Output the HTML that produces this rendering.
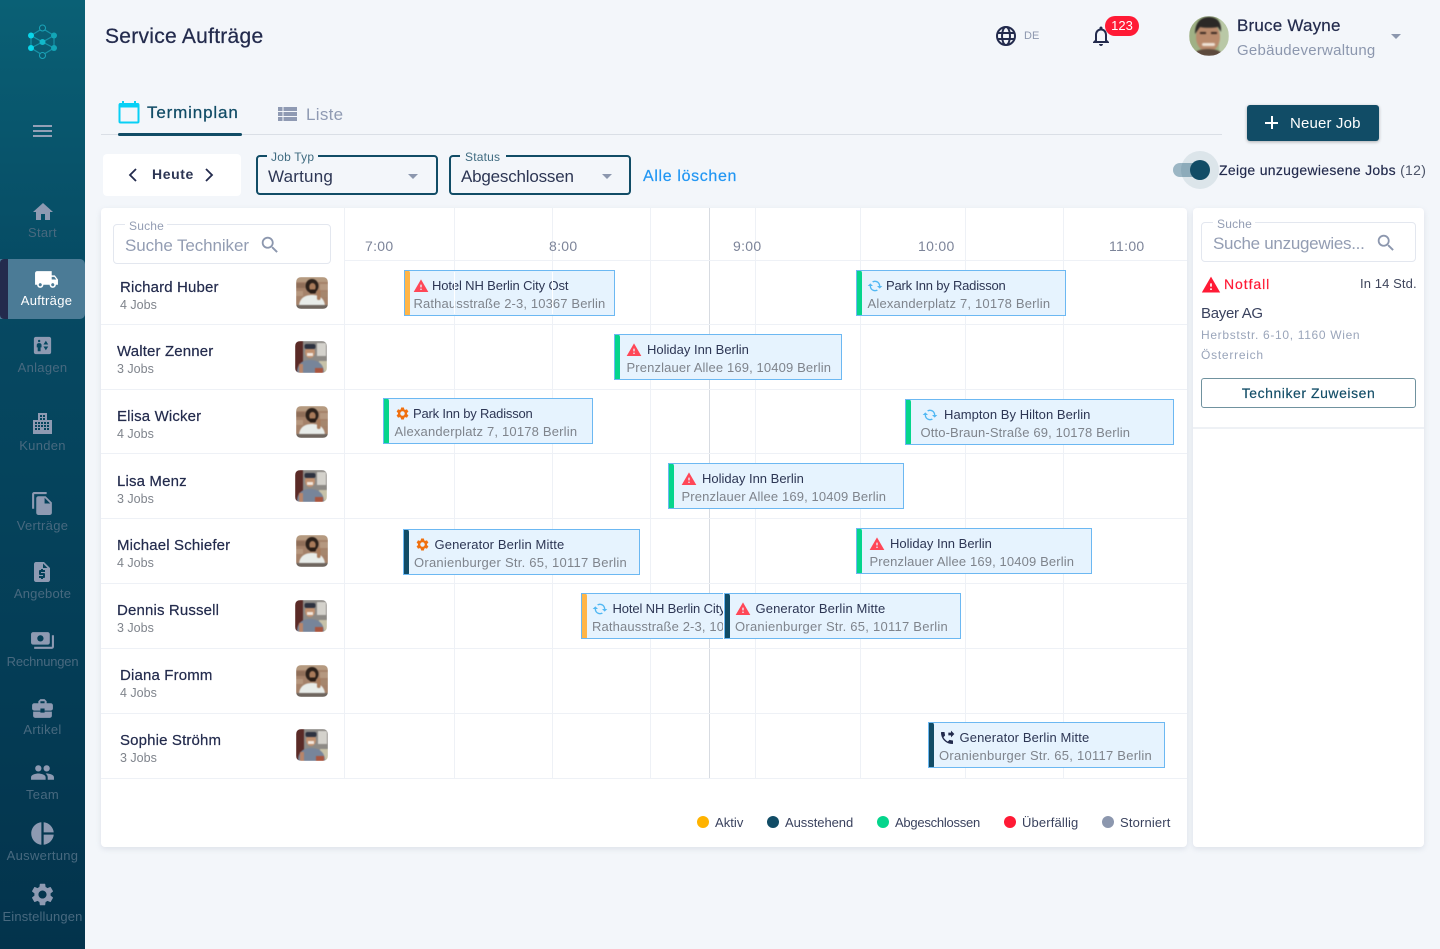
<!DOCTYPE html>
<html lang="de"><head><meta charset="utf-8"><title>Service Aufträge</title>
<style>
*{box-sizing:border-box}
html,body{margin:0;padding:0}
body{width:1440px;height:949px;position:relative;overflow:hidden;background:#f3f6fa;font-family:"Liberation Sans","DejaVu Sans",sans-serif;color:#232b4d}
.a{position:absolute}
.t{position:absolute;white-space:nowrap;line-height:20px;height:20px}
svg{position:absolute;display:block}
#side{left:0;top:0;width:85px;height:949px;background:linear-gradient(180deg,#0a6075 0%,#064a63 30%,#03334c 100%)}
.nl{position:absolute;left:0;width:85px;text-align:center;font-size:13px;color:#48697f;line-height:16px;letter-spacing:.3px;white-space:nowrap}
.ni{position:absolute;fill:#8e9ab2}
.card{position:absolute;height:46px;background:#e6f3fe;border:1.5px solid #6cb8f2;overflow:hidden}
.bar{position:absolute;left:-1.5px;top:-1.5px;bottom:-1.5px;width:6px;border-radius:0 3px 3px 0}
.ti{position:absolute;font-size:13px;line-height:18px;color:#2d3654;white-space:nowrap;margin-top:1px;margin-left:.5px}
.ad{position:absolute;font-size:13px;line-height:18px;color:#7f848c;white-space:nowrap;margin-top:1px}
.hol{letter-spacing:0}.gen{letter-spacing:.12px}.prk{letter-spacing:-.2px}.htl{letter-spacing:-.13px}.hmp{letter-spacing:.05px}
.prz,.rat,.ott{letter-spacing:.13px}.alx{letter-spacing:.19px}.ora{letter-spacing:.25px}
.nm{font-size:15px;color:#232b4d;letter-spacing:.15px;margin-top:1px;-webkit-text-stroke:.2px #232b4d}
.jb{font-size:12.5px;color:#7f848c;letter-spacing:0}
.h{position:absolute;left:345px;width:842px;height:1px;background:#eef1f6}
.h2{position:absolute;left:101px;width:244px;height:1px;background:#eef1f6}
.v{position:absolute;top:208px;height:571px;width:1px;background:#eef1f6}
.tm{font-size:14px;color:#7c8499;letter-spacing:.3px}
.lg{font-size:13px;color:#3a425e;margin-top:1px}
.dot{position:absolute;width:12px;height:12px;border-radius:50%;top:816px}
.av{position:absolute;width:32px;height:32px;border-radius:5px;overflow:hidden}
.av svg{left:0;top:0;filter:blur(.6px)}
</style></head><body>
<svg width="0" height="0" style="position:absolute">
<defs>
<symbol id="warn" viewBox="0 0 24 24"><path d="M1 21h22L12 2 1 21zm12-3h-2v-2h2v2zm0-4h-2v-4h2v4z"/></symbol>
<symbol id="search" viewBox="0 0 24 24"><path d="M15.5 14h-.79l-.28-.27C15.41 12.59 16 11.11 16 9.5 16 5.91 13.09 3 9.5 3S3 5.91 3 9.5 5.91 16 9.5 16c1.61 0 3.09-.59 4.23-1.57l.27.28v.79l5 4.99L20.49 19l-4.99-5zm-6 0C7.01 14 5 11.99 5 9.5S7.01 5 9.5 5 14 7.01 14 9.5 11.99 14 9.5 14z"/></symbol>
<symbol id="sync" viewBox="0 0 24 24"><path d="M12 6v3l4-4-4-4v3c-4.42 0-8 3.58-8 8 0 1.57.46 3.03 1.24 4.26L6.7 14.8C6.25 13.97 6 13.01 6 12c0-3.31 2.69-6 6-6zm6.76 1.74L17.3 9.2c.44.84.7 1.79.7 2.8 0 3.31-2.69 6-6 6v-3l-4 4 4 4v-3c4.42 0 8-3.58 8-8 0-1.57-.46-3.03-1.24-4.26z" transform="rotate(90 12 12)"/></symbol>
<symbol id="gear" viewBox="0 0 24 24"><path d="M19.14 12.94c.04-.3.06-.61.06-.94 0-.32-.02-.64-.07-.94l2.03-1.58c.18-.14.23-.41.12-.61l-1.92-3.32c-.12-.22-.37-.29-.59-.22l-2.39.96c-.5-.38-1.03-.7-1.62-.94l-.36-2.54c-.04-.24-.24-.41-.48-.41h-3.84c-.24 0-.43.17-.47.41l-.36 2.54c-.59.24-1.13.57-1.62.94l-2.39-.96c-.22-.08-.47 0-.59.22L2.74 8.87c-.12.21-.08.47.12.61l2.03 1.58c-.05.3-.09.63-.09.94s.02.64.07.94l-2.03 1.58c-.18.14-.23.41-.12.61l1.92 3.32c.12.22.37.29.59.22l2.39-.96c.5.38 1.03.7 1.62.94l.36 2.54c.05.24.24.41.48.41h3.84c.24 0 .44-.17.47-.41l.36-2.54c.59-.24 1.13-.56 1.62-.94l2.39.96c.22.08.47 0 .59-.22l1.92-3.32c.12-.22.07-.47-.12-.61l-2.01-1.58zM12 15.6c-1.98 0-3.6-1.62-3.6-3.6s1.62-3.6 3.6-3.6 3.6 1.62 3.6 3.6-1.62 3.6-3.6 3.6z"/></symbol>
<symbol id="phone" viewBox="0 0 24 24"><path d="M18 11l5-5-5-5v3h-4v4h4v3zm2 4.5c-1.25 0-2.45-.2-3.57-.57-.35-.11-.74-.03-1.02.24l-2.2 2.2c-2.83-1.44-5.15-3.75-6.59-6.59l2.2-2.21c.28-.26.36-.65.25-1C8.7 6.45 8.5 5.25 8.5 4c0-.55-.45-1-1-1H4c-.55 0-1 .45-1 1 0 9.39 7.61 17 17 17 .55 0 1-.45 1-1v-3.5c0-.55-.45-1-1-1z"/></symbol>
<symbol id="p1" viewBox="0 0 32 32">
<rect width="32" height="32" fill="#a5826a"/><rect y="0" width="32" height="5" fill="#b59a80"/><rect x="0" y="6" width="9" height="5" fill="#8f6e58"/><rect x="24" y="7" width="8" height="6" fill="#b59880"/><rect x="0" y="14" width="7" height="5" fill="#b5967d"/><rect x="25" y="15" width="7" height="5" fill="#a5866d"/>
<ellipse cx="16" cy="9" rx="6.500" ry="7" fill="#2b201a"/><ellipse cx="16.500" cy="10" rx="3.200" ry="4" fill="#a87a5a"/><rect x="13.500" y="12.500" width="6.500" height="4" rx="1.500" fill="#2a1d16"/>
<path d="M3 30c0-8 5-12 13-12s13 4 13 12z" fill="#e8ece9"/><rect x="21" y="13" width="3.500" height="10" rx="1.500" fill="#a87a5a"/><rect y="28" width="32" height="4" fill="#6f665f"/></symbol>
<symbol id="p2" viewBox="0 0 32 32">
<rect width="32" height="32" fill="#8d8a86"/><rect width="8" height="32" fill="#5a2a26"/><rect x="22" y="2" width="9" height="13" fill="#d4d2cc"/><rect x="24" y="20" width="8" height="12" fill="#c7c2a8"/>
<ellipse cx="15" cy="11" rx="5" ry="6" fill="#c0906f"/><rect x="9.500" y="3" width="11" height="5" rx="2" fill="#2d3240"/><rect x="12" y="12" width="6" height="3" fill="#f1e6dc"/>
<path d="M2 32c0-9 5-13 13-13s14 4 14 13z" fill="#77859a"/><rect x="4" y="23" width="4" height="9" fill="#b9856a"/><rect x="20" y="27" width="8" height="5" fill="#a9553e"/></symbol>
</defs></svg>

<div id="side" class="a"></div>
<svg style="left:26px;top:24px" width="33" height="36" viewBox="0 0 33 36" fill="none">
<g stroke="#1893a8" stroke-width="1.2"><path d="M5 11.5L16.500 4.500 28 11.500V24L16.500 31 5 24z"/><path d="M5 11.500L16.500 18 28 11.500M5 24l11.500-6"/><path d="M16.500 18L28 24"/></g>
<circle cx="16.500" cy="4" r="3" fill="#0a5a70" stroke="#1aa6bb" stroke-width="1"/><circle cx="16.500" cy="31.500" r="3" fill="#0a5a70" stroke="#1aa6bb" stroke-width="1"/>
<circle cx="5" cy="11.500" r="3" fill="#08d6ea"/><circle cx="5" cy="24" r="3" fill="#08d6ea"/><circle cx="28" cy="11.500" r="3" fill="#12a5b6"/><circle cx="28" cy="24" r="3" fill="#12a5b6"/><circle cx="16.500" cy="18" r="3" fill="#12b8ca"/>
</svg>
<div class="a" style="left:33px;top:125px;width:19px;height:2px;background:#93a0b6"></div>
<div class="a" style="left:33px;top:130px;width:19px;height:2px;background:#93a0b6"></div>
<div class="a" style="left:33px;top:135px;width:19px;height:2px;background:#93a0b6"></div>

<svg class="ni" style="left:31px;top:200px" width="24" height="24" viewBox="0 0 24 24"><path d="M10 20v-6h4v6h5v-8h3L12 3 2 12h3v8z"/></svg>
<div class="nl" style="top:225px">Start</div>

<div class="a" style="left:0;top:259px;width:85px;height:60px;background:#4b7b96;border-radius:0 5px 5px 0"></div>
<div class="a" style="left:0;top:259px;width:8px;height:60px;background:#232b4d;border-radius:4px 0 0 4px"></div>
<svg style="left:34px;top:267px;fill:#fff" width="25" height="25" viewBox="0 0 24 24"><path d="M20 8h-3V4H3c-1.100 0-2 .9-2 2v11h2c0 1.660 1.340 3 3 3s3-1.340 3-3h6c0 1.660 1.340 3 3 3s3-1.340 3-3h2v-5l-3-4zM6 18.500c-.83 0-1.500-.67-1.500-1.500s.67-1.500 1.500-1.500 1.500.67 1.500 1.500-.67 1.500-1.500 1.500zm13.500-9l1.960 2.500H17V9.500h2.500zm-1.500 9c-.83 0-1.500-.67-1.500-1.500s.67-1.500 1.500-1.500 1.500.67 1.500 1.500-.67 1.500-1.500 1.500z"/></svg>
<div class="nl" style="top:293px;left:4px;color:#fff">Aufträge</div>

<svg class="ni" style="left:31px;top:334px" width="23" height="23" viewBox="0 0 24 24"><path d="M19 3H5c-1.100 0-2 .9-2 2v14c0 1.100.9 2 2 2h14c1.100 0 2-.9 2-2V5c0-1.100-.9-2-2-2zM8.500 6c.69 0 1.250.56 1.250 1.250S9.190 8.500 8.500 8.500s-1.250-.56-1.250-1.250S7.810 6 8.500 6zM11 14h-1v4H7v-4H6v-2.500c0-1.100.9-2 2-2h1c1.100 0 2 .9 2 2V14zm4.500 3L13 13h5l-2.500 4zM13 11l2.500-4 2.500 4h-5z"/></svg>
<div class="nl" style="top:360px">Anlagen</div>

<svg class="ni" style="left:32px;top:413px" width="21" height="21" viewBox="0 0 21 21"><path fill-rule="evenodd" d="M6 0h9v7h5v14H1V7h5zM8 2v2h2V2zm3 0v2h2V2zM8 5v2h2V5zm3 0v2h2V5zM3 9v2h2V9zm3 0v2h2V9zm3 0v2h2V9zm3 0v2h2V9zm3 0v2h2V9zM3 12v2h2v-2zm3 0v2h2v-2zm3 0v2h2v-2zm3 0v2h2v-2zm3 0v2h2v-2zM3 15v2h2v-2zm3 0v2h2v-2zm6 0v2h2v-2zm3 0v2h2v-2z"/></svg>
<div class="nl" style="top:438px">Kunden</div>

<svg class="ni" style="left:30px;top:491px" width="25" height="25" viewBox="0 0 24 24"><path d="M16 1H4c-1.100 0-2 .9-2 2v14h2V3h12V1zm-1 4l6 6v10c0 1.100-.9 2-2 2H7.990C6.890 23 6 22.100 6 21l.01-14c0-1.100.89-2 1.990-2h7zm-1 7h5.500L14 6.500V12z"/></svg>
<div class="nl" style="top:518px">Verträge</div>

<svg class="ni" style="left:30px;top:560px" width="24" height="24" viewBox="0 0 24 24"><path d="M14 2H6c-1.100 0-2 .9-2 2v16c0 1.100.89 2 1.990 2H18c1.100 0 2-.9 2-2V8l-6-6zm1 10h-4v1h3c.55 0 1 .45 1 1v3c0 .55-.45 1-1 1h-1v1h-2v-1H9v-2h4v-1h-3c-.55 0-1-.45-1-1v-3c0-.55.45-1 1-1h1V9h2v1h2v2zm-2-4V3.500L17.500 8H13z"/></svg>
<div class="nl" style="top:586px;letter-spacing:.2px">Angebote</div>

<svg class="ni" style="left:30px;top:628px" width="25" height="25" viewBox="0 0 24 24"><path d="M19 14V6c0-1.100-.9-2-2-2H3c-1.100 0-2 .9-2 2v8c0 1.100.9 2 2 2h14c1.100 0 2-.9 2-2zm-9-1c-1.660 0-3-1.340-3-3s1.340-3 3-3 3 1.340 3 3-1.340 3-3 3zm13-6v11c0 1.100-.9 2-2 2H4v-2h17V7h2z"/></svg>
<div class="nl" style="top:654px;letter-spacing:-.2px">Rechnungen</div>

<svg class="ni" style="left:30px;top:696px" width="25" height="25" viewBox="0 0 24 24"><path d="M10 16v-1H3.010L3 19c0 1.110.89 2 2 2h14c1.110 0 2-.89 2-2v-4h-7v1h-4zm10-9h-4.010V5l-2-2h-4l-2 2v2H4c-1.100 0-2 .9-2 2v3c0 1.110.89 2 2 2h6v-2h4v2h6c1.100 0 2-.9 2-2V9c0-1.100-.9-2-2-2zm-6 0h-4V5h4v2z"/></svg>
<div class="nl" style="top:722px">Artikel</div>

<svg class="ni" style="left:30px;top:760px" width="25" height="25" viewBox="0 0 24 24"><path d="M16 11c1.660 0 2.990-1.340 2.990-3S17.660 5 16 5c-1.660 0-3 1.340-3 3s1.340 3 3 3zm-8 0c1.660 0 2.990-1.340 2.990-3S9.660 5 8 5C6.340 5 5 6.340 5 8s1.340 3 3 3zm0 2c-2.330 0-7 1.170-7 3.500V19h14v-2.500c0-2.330-4.670-3.500-7-3.500zm8 0c-.29 0-.62.02-.97.05 1.160.84 1.970 1.970 1.970 3.450V19h6v-2.500c0-2.330-4.670-3.500-7-3.500z"/></svg>
<div class="nl" style="top:787px">Team</div>

<svg class="ni" style="left:29px;top:820px" width="27" height="27" viewBox="0 0 24 24"><path d="M11 2v20c-5.070-.5-9-4.790-9-10s3.930-9.500 9-10zm2.030 0v8.990H22c-.47-4.740-4.240-8.520-8.970-8.990zm0 11.010V22c4.740-.47 8.500-4.250 8.970-8.990h-8.970z"/></svg>
<div class="nl" style="top:848px">Auswertung</div>

<svg class="ni" style="left:29px;top:881px" width="27" height="27" viewBox="0 0 24 24"><use href="#gear"/></svg>
<div class="nl" style="top:909px;letter-spacing:.15px">Einstellungen</div>

<!-- Header -->
<div class="t" style="left:105px;top:24px;height:26px;line-height:26px;font-size:21px;color:#232b4d;letter-spacing:.27px;-webkit-text-stroke:.25px #232b4d">Service Aufträge</div>
<svg style="left:995px;top:25px" width="22" height="22" viewBox="0 0 22 22" fill="none" stroke="#232b4d" stroke-width="2"><circle cx="11" cy="11" r="9"/><ellipse cx="11" cy="11" rx="4" ry="9"/><path d="M2 8h18M2 14h18"/></svg>
<div class="t" style="left:1024px;top:26px;font-size:11px;color:#8c97ae">DE</div>
<svg style="left:1089px;top:24px;fill:#232b4d" width="24" height="24" viewBox="0 0 24 24"><path d="M12 22c1.100 0 2-.9 2-2h-4c0 1.100.9 2 2 2zm6-6v-5c0-3.070-1.630-5.640-4.500-6.320V4c0-.83-.67-1.500-1.500-1.500s-1.500.67-1.500 1.500v.68C7.640 5.360 6 7.920 6 11v5l-2 2v1h16v-1l-2-2zm-2 1H8v-6c0-2.480 1.510-4.500 4-4.500s4 2.020 4 4.500v6z"/></svg>
<div class="a" style="left:1105px;top:16px;width:34px;height:20px;border-radius:10px;background:#ff1a35;color:#fff;font-size:13px;line-height:20px;text-align:center">123</div>
<svg style="left:1189px;top:16px" width="40" height="40" viewBox="0 0 40 40"><defs><clipPath id="cc"><circle cx="20" cy="20" r="20"/></clipPath></defs><g clip-path="url(#cc)"><g style="filter:blur(.8px)"><rect width="40" height="40" fill="#9fb185"/><rect x="30" width="10" height="40" fill="#b9c8a6"/><ellipse cx="19" cy="21" rx="12" ry="15" fill="#b98a6c"/><path d="M6 18C6 6 12 1 20 1s13 5 12 15l-3-5c-6 1-13 1-18 0z" fill="#2b2826"/><rect x="11" y="16" width="6" height="2" fill="#3b2a22"/><rect x="22" y="16" width="6" height="2" fill="#3b2a22"/><rect x="13" y="27" width="13" height="3" rx="1.500" fill="#efe2d6"/><path d="M4 40c1-5 7-7 15-7s14 2 15 7z" fill="#5d4a3d"/></g></g></svg>
<div class="t" style="left:1237px;top:16px;font-size:17px;color:#232b4d;letter-spacing:.2px;-webkit-text-stroke:.2px #232b4d">Bruce Wayne</div>
<div class="t" style="left:1237px;top:41px;font-size:15px;color:#8c97ae;letter-spacing:.25px">Gebäudeverwaltung</div>
<div class="a" style="left:1391px;top:34px;width:0;height:0;border-left:5px solid transparent;border-right:5px solid transparent;border-top:5px solid #8c97ae"></div>

<!-- Tabs -->
<svg style="left:118px;top:100px" width="22" height="24" viewBox="0 0 22 24" fill="none"><rect x="1.500" y="4" width="19" height="18.500" rx="1" stroke="#08d0f5" stroke-width="2"/><rect x="1.500" y="3" width="19" height="4.500" fill="#08d0f5"/><rect x="4" y="1" width="2" height="3" fill="#08d0f5"/><rect x="16" y="1" width="2" height="3" fill="#08d0f5"/></svg>
<div class="t" style="left:147px;top:103px;font-size:17px;color:#114c66;letter-spacing:.85px;-webkit-text-stroke:.25px #114c66">Terminplan</div>
<svg style="left:278px;top:107px;fill:#8f9ab3" width="19" height="15" viewBox="0 0 19 15"><rect width="4.500" height="4"/><rect x="5.500" width="13.500" height="4"/><rect y="5" width="4.500" height="4"/><rect x="5.500" y="5" width="13.500" height="4"/><rect y="10" width="4.500" height="4"/><rect x="5.500" y="10" width="13.500" height="4"/></svg>
<div class="t" style="left:306px;top:105px;font-size:17px;color:#8f9ab3;letter-spacing:.3px">Liste</div>
<div class="a" style="left:101px;top:134px;width:1121px;height:1px;background:#dadfe6"></div>
<div class="a" style="left:118px;top:133px;width:124px;height:3px;background:#114c66;border-radius:2px"></div>

<div class="a" style="left:1247px;top:105px;width:132px;height:36px;background:#114c66;border-radius:3px;box-shadow:0 1px 3px rgba(0,0,0,.3)"></div>
<div class="a" style="left:1265px;top:122px;width:13px;height:1.500px;background:#fff"></div>
<div class="a" style="left:1271px;top:116px;width:1.500px;height:13px;background:#fff"></div>
<div class="t" style="left:1290px;top:114px;font-size:15px;color:#fff;letter-spacing:.15px">Neuer Job</div>

<!-- Filters -->
<div class="a" style="left:103px;top:154px;width:138px;height:42px;background:#fff;border-radius:4px"></div>
<svg style="left:127px;top:167px" width="12" height="16" viewBox="0 0 12 16" fill="none" stroke="#232b4d" stroke-width="1.800"><path d="M9 2L3 8l6 6"/></svg>
<div class="t" style="left:152px;top:164px;font-size:14px;font-weight:bold;color:#2d3654;letter-spacing:.6px">Heute</div>
<svg style="left:203px;top:167px" width="12" height="16" viewBox="0 0 12 16" fill="none" stroke="#232b4d" stroke-width="1.800"><path d="M3 2l6 6-6 6"/></svg>

<div class="a" style="left:256px;top:155px;width:182px;height:40px;border:2px solid #114c66;border-radius:4px"></div>
<div class="a" style="left:267px;top:150px;width:51px;height:10px;background:#f3f6fa"></div>
<div class="t" style="left:271px;top:147px;font-size:12px;color:#3f6b80;letter-spacing:.2px">Job Typ</div>
<div class="t" style="left:268px;top:167px;font-size:17px;color:#2d3654;letter-spacing:.2px">Wartung</div>
<div class="a" style="left:408px;top:174px;width:0;height:0;border-left:5px solid transparent;border-right:5px solid transparent;border-top:5px solid #8c97ae"></div>

<div class="a" style="left:449px;top:155px;width:182px;height:40px;border:2px solid #114c66;border-radius:4px"></div>
<div class="a" style="left:460px;top:150px;width:46px;height:10px;background:#f3f6fa"></div>
<div class="t" style="left:465px;top:147px;font-size:12px;color:#3f6b80;letter-spacing:.2px">Status</div>
<div class="t" style="left:461px;top:167px;font-size:17px;color:#2d3654;letter-spacing:-.2px">Abgeschlossen</div>
<div class="a" style="left:602px;top:174px;width:0;height:0;border-left:5px solid transparent;border-right:5px solid transparent;border-top:5px solid #8c97ae"></div>

<div class="t" style="left:643px;top:167px;font-size:16px;color:#2196f3;letter-spacing:.65px;-webkit-text-stroke:.2px #2196f3">Alle löschen</div>

<div class="a" style="left:1173px;top:163px;width:34px;height:14px;border-radius:7px;background:#9bb6c4"></div>
<div class="a" style="left:1181px;top:151px;width:38px;height:38px;border-radius:50%;background:rgba(17,76,102,.1)"></div>
<div class="a" style="left:1190px;top:160px;width:20px;height:20px;border-radius:50%;background:#114c66"></div>
<div class="t" style="left:1219px;top:160px;font-size:14px;color:#232b4d;letter-spacing:.3px;-webkit-text-stroke:.15px #232b4d">Zeige unzugewiesene Jobs <span style="color:#4c5468;-webkit-text-stroke:0">(12)</span></div>

<!-- Main panel -->
<div class="a" style="left:101px;top:208px;width:1086px;height:639px;background:#fff;border-radius:4px;box-shadow:0 2px 6px rgba(120,135,160,.18)"></div>
<div class="a" style="left:1193px;top:208px;width:231px;height:639px;background:#fff;border-radius:4px;box-shadow:0 2px 6px rgba(120,135,160,.18)"></div>

<div class="v" style="left:344px"></div><div class="v" style="left:454px"></div><div class="v" style="left:552px"></div><div class="v" style="left:650px"></div><div class="v" style="left:709px;background:#d7dbe1"></div><div class="v" style="left:755px"></div><div class="v" style="left:860px"></div><div class="v" style="left:965px"></div><div class="v" style="left:1063px"></div>
<div class="h" style="top:260px"></div>
<div class="h" style="top:324px"></div><div class="h" style="top:389px"></div><div class="h" style="top:453px"></div><div class="h" style="top:518px"></div><div class="h" style="top:583px"></div><div class="h" style="top:648px"></div><div class="h" style="top:713px"></div><div class="h" style="top:778px"></div>
<div class="h2" style="top:324px"></div><div class="h2" style="top:389px"></div><div class="h2" style="top:453px"></div><div class="h2" style="top:518px"></div><div class="h2" style="top:583px"></div><div class="h2" style="top:648px"></div><div class="h2" style="top:713px"></div><div class="h2" style="top:778px"></div>

<!-- Search tech -->
<div class="a" style="left:113px;top:224px;width:218px;height:40px;border:1px solid #e3e7ef;border-radius:4px"></div>
<div class="a" style="left:125px;top:220px;width:42px;height:8px;background:#fff"></div>
<div class="t" style="left:129px;top:216px;font-size:12px;color:#939db3;letter-spacing:.2px">Suche</div>
<div class="t" style="left:125px;top:236px;font-size:17px;color:#939db3;letter-spacing:-.1px">Suche Techniker</div>
<svg style="left:259px;top:234px;fill:#8c97ae" width="22" height="22" viewBox="0 0 24 24"><use href="#search"/></svg>

<div class="t tm" style="left:365px;top:236px">7:00</div><div class="t tm" style="left:549px;top:236px">8:00</div><div class="t tm" style="left:733px;top:236px">9:00</div><div class="t tm" style="left:918px;top:236px">10:00</div><div class="t tm" style="left:1109px;top:236px">11:00</div>

<!-- Techs -->
<div class="t nm" style="left:120px;top:277px">Richard Huber</div><div class="t jb" style="left:120px;top:295px">4 Jobs</div><div class="av" style="left:296px;top:277px"><svg width="32" height="32"><use href="#p1"/></svg></div>
<div class="t nm" style="left:117px;top:341px">Walter Zenner</div><div class="t jb" style="left:117px;top:359px">3 Jobs</div><div class="av" style="left:295px;top:341px"><svg width="32" height="32"><use href="#p2"/></svg></div>
<div class="t nm" style="left:117px;top:406px">Elisa Wicker</div><div class="t jb" style="left:117px;top:424px">4 Jobs</div><div class="av" style="left:296px;top:406px"><svg width="32" height="32"><use href="#p1"/></svg></div>
<div class="t nm" style="left:117px;top:471px">Lisa Menz</div><div class="t jb" style="left:117px;top:489px">3 Jobs</div><div class="av" style="left:295px;top:470px"><svg width="32" height="32"><use href="#p2"/></svg></div>
<div class="t nm" style="left:117px;top:535px">Michael Schiefer</div><div class="t jb" style="left:117px;top:553px">4 Jobs</div><div class="av" style="left:296px;top:535px"><svg width="32" height="32"><use href="#p1"/></svg></div>
<div class="t nm" style="left:117px;top:600px">Dennis Russell</div><div class="t jb" style="left:117px;top:618px">3 Jobs</div><div class="av" style="left:295px;top:600px"><svg width="32" height="32"><use href="#p2"/></svg></div>
<div class="t nm" style="left:120px;top:665px">Diana Fromm</div><div class="t jb" style="left:120px;top:683px">4 Jobs</div><div class="av" style="left:296px;top:665px"><svg width="32" height="32"><use href="#p1"/></svg></div>
<div class="t nm" style="left:120px;top:730px">Sophie Ströhm</div><div class="t jb" style="left:120px;top:748px">3 Jobs</div><div class="av" style="left:296px;top:729px"><svg width="32" height="32"><use href="#p2"/></svg></div>

<!-- Job cards -->
<div class="card" style="left:404px;top:270px;width:211px"><div class="bar" style="background:#ffb547"></div>
<svg style="left:8px;top:7px;fill:#ff4757" width="16" height="16" viewBox="0 0 24 24"><use href="#warn"/></svg>
<div class="ti htl" style="left:26.500px;top:5px">Hotel NH Berlin City Ost</div><div class="ad rat" style="left:8.500px;top:23px">Rathausstraße 2-3, 10367 Berlin</div></div>
<div class="a" style="left:454px;top:272px;width:1px;height:42px;background:#fff"></div><div class="a" style="left:552px;top:272px;width:1px;height:42px;background:#fff"></div>

<div class="card" style="left:856px;top:270px;width:210px"><div class="bar" style="background:#05d58c"></div>
<svg style="left:10px;top:6.500px;fill:#52b8f3" width="16" height="16" viewBox="0 0 24 24"><use href="#sync"/></svg>
<div class="ti prk" style="left:28.500px;top:5px">Park Inn by Radisson</div><div class="ad alx" style="left:10.500px;top:23px">Alexanderplatz 7, 10178 Berlin</div></div>

<div class="card" style="left:614px;top:334px;width:228px"><div class="bar" style="background:#05d58c"></div>
<svg style="left:11px;top:7px;fill:#ff4757" width="16" height="16" viewBox="0 0 24 24"><use href="#warn"/></svg>
<div class="ti hol" style="left:31.500px;top:5px">Holiday Inn Berlin</div><div class="ad prz" style="left:11.500px;top:23px">Prenzlauer Allee 169, 10409 Berlin</div></div>

<div class="card" style="left:383px;top:398px;width:210px"><div class="bar" style="background:#05d58c"></div>
<svg style="left:10.500px;top:7px;fill:#f0700f" width="15" height="15" viewBox="0 0 24 24"><use href="#gear"/></svg>
<div class="ti prk" style="left:28.500px;top:5px">Park Inn by Radisson</div><div class="ad alx" style="left:10.500px;top:23px">Alexanderplatz 7, 10178 Berlin</div></div>

<div class="card" style="left:905px;top:399px;width:269px"><div class="bar" style="background:#05d58c"></div>
<svg style="left:16px;top:6.500px;fill:#52b8f3" width="16" height="16" viewBox="0 0 24 24"><use href="#sync"/></svg>
<div class="ti hmp" style="left:37.500px;top:5px">Hampton By Hilton Berlin</div><div class="ad ott" style="left:14.500px;top:23px">Otto-Braun-Straße 69, 10178 Berlin</div></div>

<div class="card" style="left:668px;top:463px;width:236px"><div class="bar" style="background:#05d58c"></div>
<svg style="left:12px;top:7px;fill:#ff4757" width="16" height="16" viewBox="0 0 24 24"><use href="#warn"/></svg>
<div class="ti hol" style="left:32.500px;top:5px">Holiday Inn Berlin</div><div class="ad prz" style="left:12.500px;top:23px">Prenzlauer Allee 169, 10409 Berlin</div></div>

<div class="card" style="left:403px;top:529px;width:237px"><div class="bar" style="background:#114c66"></div>
<svg style="left:10.500px;top:7px;fill:#f0700f" width="15" height="15" viewBox="0 0 24 24"><use href="#gear"/></svg>
<div class="ti gen" style="left:30px;top:5px">Generator Berlin Mitte</div><div class="ad ora" style="left:10px;top:23px">Oranienburger Str. 65, 10117 Berlin</div></div>

<div class="card" style="left:856px;top:528px;width:236px"><div class="bar" style="background:#05d58c"></div>
<svg style="left:12px;top:7px;fill:#ff4757" width="16" height="16" viewBox="0 0 24 24"><use href="#warn"/></svg>
<div class="ti hol" style="left:32.500px;top:5px">Holiday Inn Berlin</div><div class="ad prz" style="left:12.500px;top:23px">Prenzlauer Allee 169, 10409 Berlin</div></div>

<div class="card" style="left:581px;top:593px;width:143px"><div class="bar" style="background:#ffb547"></div>
<svg style="left:10px;top:6.500px;fill:#52b8f3" width="16" height="16" viewBox="0 0 24 24"><use href="#sync"/></svg>
<div class="ti htl" style="left:30px;top:5px">Hotel NH Berlin City Ost</div><div class="ad rat" style="left:10px;top:23px">Rathausstraße 2-3, 10367 Berlin</div></div>
<div class="a" style="left:723px;top:593px;width:1px;height:46px;background:#fff"></div>

<div class="card" style="left:724px;top:593px;width:237px"><div class="bar" style="background:#114c66"></div>
<svg style="left:10px;top:7px;fill:#ff4757" width="16" height="16" viewBox="0 0 24 24"><use href="#warn"/></svg>
<div class="ti gen" style="left:30px;top:5px">Generator Berlin Mitte</div><div class="ad ora" style="left:10px;top:23px">Oranienburger Str. 65, 10117 Berlin</div></div>

<div class="card" style="left:928px;top:722px;width:237px"><div class="bar" style="background:#114c66"></div>
<svg style="left:10px;top:6.500px;fill:#232b4d" width="16" height="16" viewBox="0 0 24 24"><use href="#phone"/></svg>
<div class="ti gen" style="left:30px;top:5px">Generator Berlin Mitte</div><div class="ad ora" style="left:10px;top:23px">Oranienburger Str. 65, 10117 Berlin</div></div>

<!-- Legend -->
<div class="dot" style="left:697px;background:#ffb300"></div><div class="t lg" style="left:715px;top:812px;letter-spacing:.05px">Aktiv</div>
<div class="dot" style="left:767px;background:#114c66"></div><div class="t lg" style="left:785px;top:812px;letter-spacing:-.05px">Ausstehend</div>
<div class="dot" style="left:877px;background:#05d58c"></div><div class="t lg" style="left:895px;top:812px;letter-spacing:-.25px">Abgeschlossen</div>
<div class="dot" style="left:1004px;background:#ff1a35"></div><div class="t lg" style="left:1022px;top:812px;letter-spacing:.15px">Überfällig</div>
<div class="dot" style="left:1102px;background:#8c97ae"></div><div class="t lg" style="left:1120px;top:812px;letter-spacing:.15px">Storniert</div>

<!-- Right panel -->
<div class="a" style="left:1201px;top:222px;width:215px;height:40px;border:1px solid #e3e7ef;border-radius:4px"></div>
<div class="a" style="left:1213px;top:218px;width:42px;height:8px;background:#fff"></div>
<div class="t" style="left:1217px;top:214px;font-size:12px;color:#939db3;letter-spacing:.2px">Suche</div>
<div class="t" style="left:1213px;top:234px;font-size:17px;color:#939db3;letter-spacing:-.28px">Suche unzugewies...</div>
<svg style="left:1375px;top:232px;fill:#8c97ae" width="22" height="22" viewBox="0 0 24 24"><use href="#search"/></svg>
<svg style="left:1201px;top:275px;fill:#ff1a35" width="20" height="20" viewBox="0 0 24 24"><use href="#warn"/></svg>
<div class="t" style="left:1224px;top:274px;font-size:14px;color:#ff1a35;letter-spacing:.93px;-webkit-text-stroke:.2px #ff1a35">Notfall</div>
<div class="t" style="left:1360px;top:274px;font-size:13px;color:#3f465c;letter-spacing:.1px">In 14 Std.</div>
<div class="t" style="left:1201px;top:304px;font-size:15px;color:#3a425e;letter-spacing:-.3px">Bayer AG</div>
<div class="t" style="left:1201px;top:325px;font-size:12px;color:#9aa5ba;letter-spacing:.67px">Herbststr. 6-10, 1160 Wien</div>
<div class="t" style="left:1201px;top:345px;font-size:12px;color:#9aa5ba;letter-spacing:.75px">Österreich</div>
<div class="a" style="left:1201px;top:378px;width:215px;height:30px;border:1px solid #70929f;border-radius:3px;text-align:center;font-size:14px;line-height:28px;color:#114c66;letter-spacing:.55px;-webkit-text-stroke:.15px #114c66">Techniker Zuweisen</div>
<div class="a" style="left:1193px;top:427px;width:231px;height:2px;background:#eef1f5"></div>
</body></html>
